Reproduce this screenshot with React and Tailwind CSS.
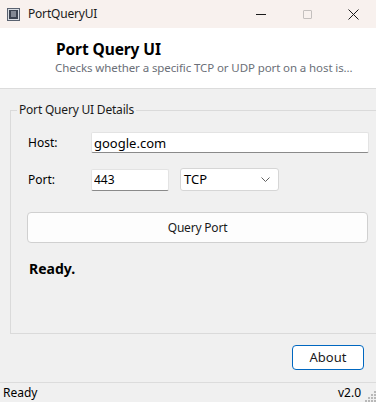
import React, { useState } from 'react';

const font = { fontFamily: '"Segoe UI", "Noto Sans", "Open Sans", sans-serif' };

function AppIcon() {
  return (
    <svg width="13" height="13" viewBox="0 0 13 13">
      <rect x="0.5" y="0.5" width="12" height="12" fill="#d9dde3" stroke="#5a6270" />
      <rect x="2" y="2" width="9" height="9" fill="#3c4350" />
      <line x1="4" y1="4" x2="9" y2="4" stroke="#c9ced6" />
      <line x1="4" y1="6" x2="9" y2="6" stroke="#c9ced6" />
      <line x1="4" y1="8" x2="9" y2="8" stroke="#c9ced6" />
    </svg>
  );
}

function SizeGrip() {
  const dots = [
    [9, 1], [9, 4], [6, 4], [9, 7], [6, 7], [3, 7], [9, 10], [6, 10], [3, 10], [0, 10],
  ];
  return (
    <svg width="12" height="12" viewBox="0 0 12 12">
      {dots.map(([x, y], i) => (
        <rect key={i} x={x + 1} y={y} width="2" height="2" fill="#b8b8b8" />
      ))}
    </svg>
  );
}

export default function App() {
  const [host, setHost] = useState('google.com');
  const [port, setPort] = useState('443');
  const [proto] = useState('TCP');

  return (
    <div className="w-[376px] h-[402px] flex flex-col bg-[#f0f0f0] overflow-hidden text-[12px] text-black" style={font}>
      {/* Title bar */}
      <div className="h-[28px] shrink-0 flex items-center bg-[#f8f1ee]">
        <div className="pl-[7px] pr-[8px] flex items-center"><AppIcon /></div>
        <span className="text-[12px] text-[#1a1a1a] tracking-[-0.2px]">PortQueryUI</span>
        <div className="ml-auto flex items-center h-full">
          <div className="w-[46px] h-full flex items-center justify-center">
            <div className="w-[10px] h-px bg-[#1a1a1a]" />
          </div>
          <div className="w-[46px] h-full flex items-center justify-center">
            <div className="w-[9px] h-[9px] border border-[#c4c0be] rounded-[1px]" />
          </div>
          <div className="w-[46px] h-full flex items-center justify-center">
            <svg width="11" height="11" viewBox="0 0 11 11">
              <path d="M0.5 0.5 L10.5 10.5 M10.5 0.5 L0.5 10.5" stroke="#1a1a1a" strokeWidth="1" />
            </svg>
          </div>
        </div>
      </div>

      {/* Header */}
      <div className="h-[61px] shrink-0 bg-white border-b border-[#dcdcdc] pl-[55px] pt-[11px]">
        <div className="text-[15.5px] font-bold leading-[21px] pl-[1px] tracking-[-0.1px]">Port Query UI</div>
        <div className="text-[11.5px] leading-[16px] text-[#6b6f78] whitespace-nowrap tracking-[-0.1px]">
          Checks whether a specific TCP or UDP port on a host is...
        </div>
      </div>

      {/* Group box */}
      <fieldset className="mt-[13px] ml-[10px] w-[380px] h-[232px] shrink-0 border border-[#dadada] p-0 m-0">
        <legend className="ml-[6px] px-[2px] text-[12px] leading-[16px] text-[#1a1a1a] tracking-[-0.2px]">Port Query UI Details</legend>
        <div className="flex flex-col pl-[17px] pt-[14px]">
          <div className="flex items-center h-[21px]">
            <label className="w-[63px] text-[12px]">Host:</label>
            <input
              value={host}
              onChange={e => setHost(e.target.value)}
              className="w-[278px] h-[21px] bg-white border border-[#e3e3e3] border-b-[#8a8a8a] rounded-[2px] px-[2px] text-[13px] outline-none"
            />
          </div>
          <div className="flex items-center h-[23px] mt-[15px]">
            <label className="w-[63px] text-[12px]">Port:</label>
            <input
              value={port}
              onChange={e => setPort(e.target.value)}
              className="w-[78px] h-[22px] bg-white border border-[#e3e3e3] border-b-[#8a8a8a] rounded-[2px] px-[2px] text-[12px] outline-none"
            />
            <div className="ml-[11px] w-[99px] h-[23px] bg-white border border-[#d6d6d6] rounded-[3px] flex items-center pl-[3px] pr-[8px]">
              <span className="text-[13px]">{proto}</span>
              <svg className="ml-auto" width="9" height="6" viewBox="0 0 9 6">
                <path d="M0.5 0.5 L4.5 4.5 L8.5 0.5" stroke="#606060" fill="none" />
              </svg>
            </div>
          </div>
          <button className="mt-[21px] -ml-[1px] w-[341px] h-[31px] bg-[#fdfdfd] border border-[#d0d0d0] rounded-[4px] text-[12px] text-[#1a1a1a] tracking-[-0.2px]">
            Query Port
          </button>
          <div className="mt-[16px] pl-[1px] text-[14px] font-bold leading-[20px]">Ready.</div>
        </div>
      </fieldset>

      {/* Bottom buttons */}
      <div className="flex justify-end pr-[12px] mt-[11px] shrink-0">
        <button className="w-[72px] h-[25px] bg-white border border-[#0067c0] rounded-[4px] text-[13px] text-[#1a1a1a]">
          About
        </button>
      </div>

      {/* Status bar */}
      <div className="mt-auto h-[20px] shrink-0 border-t border-[#dcdcdc] flex items-center pl-[3px]">
        <span className="text-[12px]">Ready</span>
        <span className="ml-auto text-[12px] mr-[3px]">v2.0</span>
        <div className="self-end"><SizeGrip /></div>
      </div>
    </div>
  );
}
